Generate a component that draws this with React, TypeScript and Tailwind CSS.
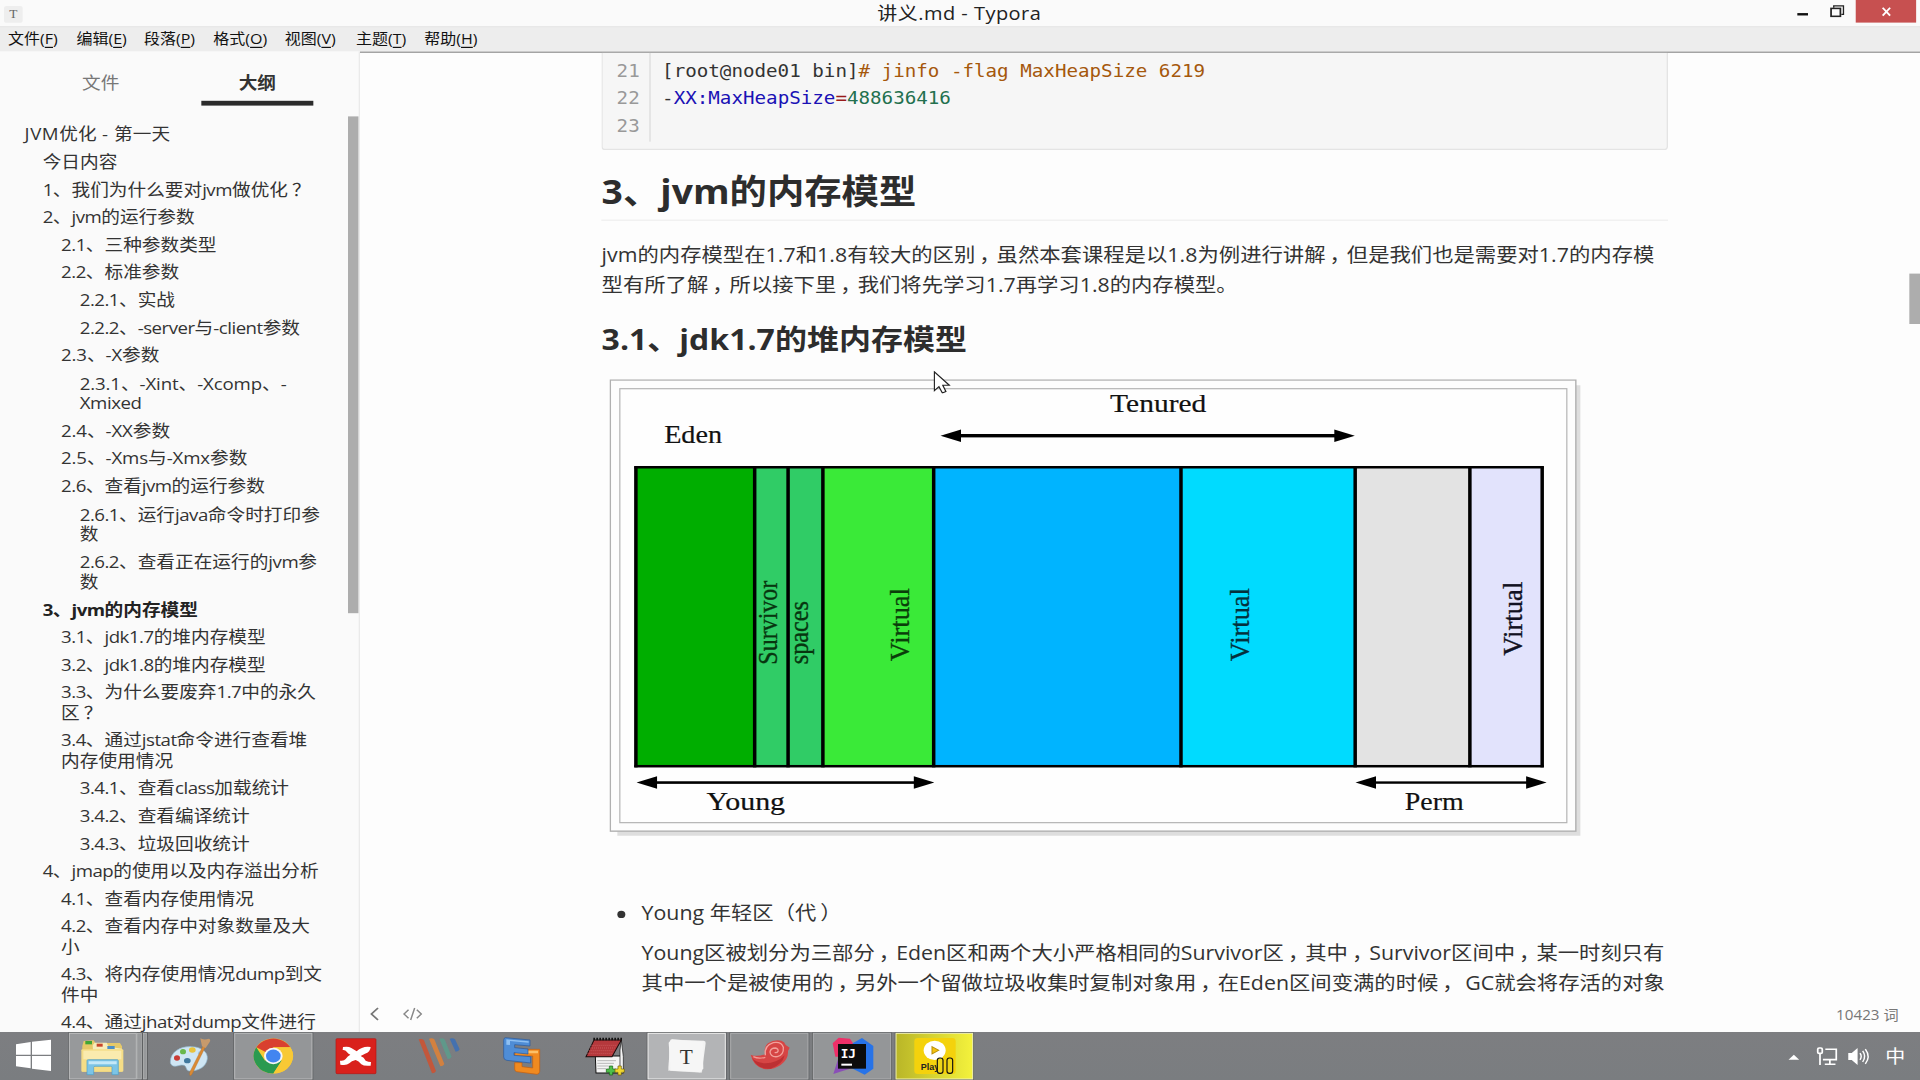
import React from "react";

const UI = "font-['Open_Sans','Noto_Sans_CJK_SC',sans-serif]";

/* ---------- text helpers ---------- */

const GLYPH_SHIFT: Record<string, string> = {
  "，": "ml-[3px] tracking-[-3px]",
  "？": "ml-[3px] tracking-[-3px]",
  "）": "ml-[3px] tracking-[-3px]",
};

function Mixed({ text, latin = "" }: { text: string; latin?: string }) {
  const parts = text.split(/([，？）]|[\x20-\x7e]+)/).filter(Boolean);
  return (
    <>
      {parts.map((p, i) => {
        if (GLYPH_SHIFT[p]) return <span key={i} className={GLYPH_SHIFT[p]}>{p}</span>;
        if (latin && /^[\x20-\x7e]+$/.test(p)) return <span key={i} className={latin}>{p}</span>;
        return <React.Fragment key={i}>{p}</React.Fragment>;
      })}
    </>
  );
}

/* ---------- title bar and menu ---------- */

function TitleBar() {
  return (
    <div className="flex h-[22.5px] shrink-0 items-start justify-between border-b border-[#dcdcdc] bg-[#fafafa]">
      <div className="flex w-[119px] pl-[3px] pt-[4.5px]">
        <div className="flex h-[14px] w-[14px] items-center justify-center rounded-[2px] bg-[#eeeeee] font-['Liberation_Serif',serif] text-[10px] leading-none text-[#666]">
          T
        </div>
      </div>
      <div className="text-[15px] leading-[22px] tracking-[0.35px] text-[#222]">讲义.md - Typora</div>
      <svg width="120" height="19" viewBox="1320 0 120 19" className="shrink-0">
        <rect x="1348" y="10.9" width="8" height="2" fill="#111" />
        <path d="M1375.3 6.4V4.9H1382.6V12H1381" fill="none" stroke="#222" strokeWidth="1" />
        <rect x="1373.3" y="7" width="7" height="6.6" fill="none" stroke="#222" strokeWidth="1.3" />
        <rect x="1391.8" y="0" width="45.3" height="19" fill="#c75050" />
        <path d="M1412 6.4l5.6 6.6M1417.6 6.4l-5.6 6.6" stroke="#fff" strokeWidth="1.4" />
      </svg>
    </div>
  );
}

function MenuBar() {
  const items: [string, string, string][] = [
    ["文件", "F", "w-[51.3px]"],
    ["编辑", "E", "w-[50.7px]"],
    ["段落", "P", "w-[52px]"],
    ["格式", "O", "w-[53.5px]"],
    ["视图", "V", "w-[53.5px]"],
    ["主题", "T", "w-[51.2px]"],
    ["帮助", "H", "w-[60px]"],
  ];
  return (
    <div className="flex h-[20.7px] shrink-0 items-start bg-[#ededed] pl-[6px] pt-[0.8px] text-[12px] text-[#111]">
      {items.map(([label, key, w]) => (
        <div key={key} className={w + " whitespace-nowrap leading-[20px]"}>
          {label}(<span className="underline underline-offset-2">{key}</span>)
        </div>
      ))}
    </div>
  );
}

/* ---------- outline ---------- */

type Entry = [number, string, string?];
const OUTLINE: Entry[] = [
  [0, "JVM优化 - 第一天"],
  [1, "今日内容"],
  [1, "1、我们为什么要对jvm做优化？"],
  [1, "2、jvm的运行参数"],
  [2, "2.1、三种参数类型"],
  [2, "2.2、标准参数"],
  [3, "2.2.1、实战"],
  [3, "2.2.2、-server与-client参数"],
  [2, "2.3、-X参数"],
  [3, "2.3.1、-Xint、-Xcomp、-", "Xmixed"],
  [2, "2.4、-XX参数"],
  [2, "2.5、-Xms与-Xmx参数"],
  [2, "2.6、查看jvm的运行参数"],
  [3, "2.6.1、运行java命令时打印参", "数"],
  [3, "2.6.2、查看正在运行的jvm参", "数"],
  [1, "3、jvm的内存模型"],
  [2, "3.1、jdk1.7的堆内存模型"],
  [2, "3.2、jdk1.8的堆内存模型"],
  [2, "3.3、为什么要废弃1.7中的永久", "区？"],
  [2, "3.4、通过jstat命令进行查看堆", "内存使用情况"],
  [3, "3.4.1、查看class加载统计"],
  [3, "3.4.2、查看编译统计"],
  [3, "3.4.3、垃圾回收统计"],
  [1, "4、jmap的使用以及内存溢出分析"],
  [2, "4.1、查看内存使用情况"],
  [2, "4.2、查看内存中对象数量及大", "小"],
  [2, "4.3、将内存使用情况dump到文", "件中"],
  [2, "4.4、通过jhat对dump文件进行"],
];
const INDENT = ["pl-[18.4px]", "pl-[32px]", "pl-[45.8px]", "pl-[59.8px]"];

function latinSpacing(level: number, text: string) {
  if (level === 0) return "tracking-[0.45px]";
  return text.includes("-X") ? "tracking-[-0.1px]" : "tracking-[-0.38px]";
}

function Sidebar() {
  return (
    <div className="flex w-[270px] shrink-0 flex-col overflow-hidden border-r border-[#eaeaea] bg-[#fafafa]">
      <div className="flex h-[53.8px] shrink-0 pt-[16px] text-[14px]">
        <div className="flex w-[151px] justify-center text-[#777]">
          <div className="leading-[20px]">文件</div>
        </div>
        <div className="flex h-[28.8px] w-[84px] justify-center border-b-[4.5px] border-[#2b2b2b] font-bold leading-[20px] text-[#333]">
          大纲
        </div>
      </div>
      <div className="flex min-h-0 flex-1">
        <div className="min-w-0 flex-1 pt-[4px] text-[14px] leading-[16.8px] text-[#333]">
          {OUTLINE.map(([level, a, b]) => (
            <div
              key={a}
              className={
                "whitespace-nowrap py-[3.13px] " +
                INDENT[level] +
                (a.startsWith("3、") ? " font-bold text-[#222]" : "")
              }
            >
              <Mixed text={a} latin={latinSpacing(level, a)} />
              {b && (
                <>
                  <br />
                  <Mixed text={b} latin="tracking-[-0.32px]" />
                </>
              )}
            </div>
          ))}
        </div>
        <div className="h-[414px] w-[8.3px] shrink-0 bg-[#adadad]" />
      </div>
    </div>
  );
}

/* ---------- heap diagram ---------- */

function Arrow({ x1, x2, y, w }: { x1: number; x2: number; y: number; w: number }) {
  return (
    <g fill="#000">
      <rect x={x1 + 15} y={y - w / 2} width={x2 - x1 - 30} height={w} />
      <path d={`M${x1} ${y}l20.5 -6.2v12.4z`} />
      <path d={`M${x2} ${y}l-20.5 -6.2v12.4z`} />
    </g>
  );
}

function Upright({ x, y, len, text, fill }: { x: number; y: number; len: number; text: string; fill: string }) {
  return (
    <text
      transform={`translate(${x} ${y}) rotate(-90)`}
      fontSize="28"
      textLength={len}
      lengthAdjust="spacingAndGlyphs"
      fill={fill}
      stroke={fill}
      strokeWidth="0.35"
    >
      {text}
    </text>
  );
}

function HeapDiagram() {
  const bars: [number, number, string][] = [
    [635.5, 754.3, "#00ae00"],
    [754.3, 787.7, "#30cc66"],
    [787.7, 822.5, "#30cc66"],
    [822.5, 933.3, "#3aea38"],
    [933.3, 1180.6, "#00b4ff"],
    [1180.6, 1354.8, "#00dbff"],
    [1354.8, 1469.5, "#e3e3e3"],
    [1469.5, 1541.8, "#e2e3fc"],
  ];
  return (
    <svg
      width="729"
      height="383.3"
      viewBox="609 379 972 460"
      preserveAspectRatio="none"
      className="ml-[5.9px] mt-[15.1px] block font-['Liberation_Serif',serif]"
    >
      <path d="M617 831h958.5v-446h4.5v450.5h-963z" fill="#dedede" />
      <rect x="610" y="379.8" width="965.5" height="451.2" fill="#fdfdfd" stroke="#b0b0b0" strokeWidth="1.4" />
      <rect x="619.5" y="388.5" width="947" height="434" fill="#fefefe" stroke="#b4b4b4" strokeWidth="1.2" />
      {bars.map(([a, b, c]) => (
        <rect key={a} x={a} y="467" width={b - a} height="299" fill={c} />
      ))}
      {[635.5, 754.3, 787.7, 822.5, 933.3, 1180.6, 1354.8, 1469.5, 1541.8].map((x) => (
        <rect key={x} x={x - 1.7} y="466" width="3.5" height="301.2" fill="#000" />
      ))}
      <rect x="634" y="465.8" width="909.4" height="2.5" fill="#000" />
      <rect x="634" y="764.8" width="909.4" height="2.5" fill="#000" />
      <Arrow x1={940.2} x2={1354.5} y={435.5} w={3.4} />
      <Arrow x1={636.2} x2={934} y={782.4} w={2.6} />
      <Arrow x1={1355.2} x2={1546.3} y={782.4} w={2.4} />
      <g fontSize="26" fill="#111" stroke="#111" strokeWidth="0.2">
        <text x="663.8" y="443.3" textLength="58" lengthAdjust="spacingAndGlyphs">Eden</text>
        <text x="1109.8" y="412" textLength="96.2" lengthAdjust="spacingAndGlyphs">Tenured</text>
        <text x="706.2" y="810" textLength="78.6" lengthAdjust="spacingAndGlyphs">Young</text>
        <text x="1404.5" y="810" textLength="59" lengthAdjust="spacingAndGlyphs">Perm</text>
      </g>
      <Upright x={776.7} y={664.5} len={84} text="Survivor" fill="#07350f" />
      <Upright x={807.6} y={664} len={63} text="spaces" fill="#07350f" />
      <Upright x={908.4} y={661} len={73} text="Virtual" fill="#0a3d0a" />
      <Upright x={1248.2} y={661} len={73} text="Virtual" fill="#04303c" />
      <Upright x={1521.3} y={655.5} len={74} text="Virtual" fill="#111122" />
    </svg>
  );
}

/* ---------- document ---------- */

function CodeBlock() {
  return (
    <div className="flex h-[81px] rounded-b-[3px] border border-t-0 border-[#e4e4e4] bg-[#f6f6f6] font-['DejaVu_Sans_Mono',monospace] text-[14.4px] leading-[23.1px]">
      <div className="h-[74px] w-[36px] border-r border-[#dddddd] pr-[7.4px] pt-[3.9px] text-right text-[#999]">
        21
        <br />
        22
        <br />
        23
      </div>
      <div className="whitespace-pre pl-[8.4px] pt-[3.9px] text-[#333]">
        [root@node01 bin]<span className="text-[#a5580c]"># jinfo -flag MaxHeapSize 6219</span>
        <br />
        -<span className="text-[#1a11b5]">XX:MaxHeapSize</span>
        <span className="text-[#981a1a]">=</span>
        <span className="text-[#22704e]">488636416</span>
      </div>
    </div>
  );
}

function Document() {
  return (
    <div className="w-[800px] text-[16px] leading-[25.3px] text-[#333]">
      <CodeBlock />
      <h2 className="mt-[15px] h-[44px] whitespace-nowrap border-b border-[#eeeeee] text-[28px] font-bold leading-[39px] text-[#2d2d2d]">
        3、jvm的内存模型
      </h2>
      <p className="mt-[16px] whitespace-nowrap">
        <Mixed text="jvm的内存模型在1.7和1.8有较大的区别，虽然本套课程是以1.8为例进行讲解，但是我们也是需要对1.7的内存模" latin="tracking-[0.04px]" />
        <br />
        <Mixed text="型有所了解，所以接下里，我们将先学习1.7再学习1.8的内存模型。" />
      </p>
      <h3 className="mt-[15.4px] whitespace-nowrap text-[24px] font-bold leading-[34px] text-[#2d2d2d]">
        3.1、jdk1.7的堆内存模型
      </h3>
      <div className="h-[0.6px]" />
      <HeapDiagram />
      <div className="mt-[50px] flex">
        <div className="ml-[12px] mt-[9.8px] h-[6px] w-[6px] rounded-full bg-[#333]" />
        <div className="whitespace-nowrap pl-[12px]">
          <p>
            <Mixed text="Young 年轻区（代）" />
          </p>
          <p className="mt-[7.2px]">
            <Mixed text="Young区被划分为三部分，Eden区和两个大小严格相同的Survivor区，其中，Survivor区间中，某一时刻只有" />
            <br />
            <Mixed text="其中一个是被使用的，另外一个留做垃圾收集时复制对象用，在Eden区间变满的时候， GC就会将存活的对象" />
          </p>
        </div>
      </div>
    </div>
  );
}

function Footer() {
  return (
    <div className="absolute inset-x-0 bottom-0 flex h-[29.6px] items-center justify-between pl-[6.8px] pr-[16px] text-[#777]">
      <div className="flex items-center gap-[17px]">
        <svg width="8" height="12" viewBox="0 0 8 12" fill="none" stroke="#777" strokeWidth="1.4">
          <path d="M6.5 1L1.6 6l4.9 5" />
        </svg>
        <svg width="15" height="12" viewBox="0 0 15 12" fill="none" stroke="#888" strokeWidth="1.1">
          <path d="M4.4 2.5L1 6l3.4 3.5M10.6 2.5L14 6l-3.4 3.5M9 1L6 11" />
        </svg>
      </div>
      <div className="text-[11.4px]">10423 词</div>
    </div>
  );
}

/* ---------- taskbar ---------- */

function Cell({ x, w = 248, children }: { x: number; w?: number; children: React.ReactNode }) {
  return (
    <svg width={w / 4} height="40" viewBox={`${x} 6 ${w} 144`} preserveAspectRatio="none" className="shrink-0">
      {children}
    </svg>
  );
}

function Frame({ x, fill, stroke, w = 232 }: { x: number; fill: string; stroke: string; w?: number }) {
  return (
    <>
      <rect x={x - 4} y="7" width={w + 8} height="143" fill="#5f6163" />
      <rect x={x} y="10" width={w} height="137" fill={fill} stroke={stroke} strokeWidth="3" />
    </>
  );
}

function Taskbar() {
  return (
    <div className="flex h-[40px] shrink-0 justify-between bg-[linear-gradient(#7d7e81,#7a7d80)]">
      <div className="flex">
        <Cell x={0} w={200}>
          <path d="M48 43l44-7v38H48zM96 35l57-6v45H96zM48 78h44v37l-44-6zM96 78h57v45l-57-7z" fill="#fff" />
        </Cell>
        <Cell x={200}>
          <rect x="204" y="7" width="240" height="143" fill="#5f6163" />
          <rect x="430" y="10" width="9" height="137" fill="#97999b" stroke="#b9babb" strokeWidth="2" />
          <rect x="413" y="10" width="11" height="137" fill="#97999b" stroke="#b9babb" strokeWidth="2" />
          <rect x="208" y="10" width="201" height="137" fill="#97999b" stroke="#bfc0c1" strokeWidth="3" />
          <path d="M247 48l4-15 30-2 5 8h74l6 10v76H246z" fill="#e6c969" />
          <rect x="256" y="33" width="20" height="10" fill="#3fa535" />
          <path d="M278 46l6-8h36l6 12 40 6v20H280z" fill="#f7edba" />
          <rect x="290" y="41" width="18" height="9" fill="#c8452c" />
          <rect x="322" y="48" width="22" height="9" fill="#4e8fc4" />
          <rect x="244" y="58" width="126" height="67" rx="3" fill="#f5dd86" />
          <rect x="250" y="62" width="114" height="26" fill="#faebae" />
          <path d="M261 92q0-3 4-3h86q4 0 4 3v42h-19v-22q0-3-4-3h-47q-4 0-4 3v22h-20z" fill="#7cc4e6" stroke="#4c9fc9" strokeWidth="2" />
          <path d="M266 94h84v9h-84z" fill="#c4e8f8" />
        </Cell>
        <Cell x={448}>
          <path d="M511 96c0-30 30-48 64-46 30 1 49 16 47 36-3 25-28 38-55 37-10-1-6-14-15-17-12-4-22 6-32 2-5-2-9-6-9-12z" fill="#cfe6f4" stroke="#8fb6cf" strokeWidth="2" />
          <ellipse cx="531" cy="84" rx="9" ry="8" fill="#c93b36" />
          <ellipse cx="549" cy="65" rx="9" ry="8" fill="#69b84c" />
          <ellipse cx="577" cy="60" rx="10" ry="8" fill="#e9c33d" />
          <ellipse cx="562" cy="92" rx="10" ry="8" fill="#41799e" />
          <ellipse cx="600" cy="70" rx="6" ry="6" fill="#9cc7e2" />
          <path d="M609 48l7 3-38 78q-4 9-8 8-3-3 0-12z" fill="#d98a35" stroke="#b36a22" strokeWidth="1" />
          <path d="M601 25q10 6 26 1 6 3 2 10l-12 18-11-5z" fill="#c79a6c" />
        </Cell>
        <Cell x={696}>
          <Frame x={704} fill="#949698" stroke="#b9babb" />
          <g transform="translate(820 78) scale(1 .89)">
            <circle r="59" fill="#f8c935" />
            <path d="M0 0L-51 -29.5A59 59 0 0 1 51 -29.5L0 -29.5z" fill="#d9402f" />
            <path d="M-51.1 -29.5A59 59 0 0 0 0 59L25.6 14.8L-25.6 14.8z" fill="#2a9a50" />
            <path d="M0 -29.5H51.1A59 59 0 0 1 0 59L25.6 14.8z" fill="#f8c935" />
            <circle r="28" fill="#f6f6f6" />
            <circle r="22" fill="#4285f0" />
          </g>
        </Cell>
        <Cell x={944}>
          <rect x="1008" y="26" width="120" height="105" rx="3" fill="#d9211c" stroke="#b31713" strokeWidth="2" />
          <path
            d="M1029 51q16-3 25 3l16 10q18-17 42-13-1 15-17 20l-13 7q10 4 15 14 8 4 16 4l-1 11q-20 2-28-4-8-11-17-13-13 2-19 10-9 8-27 4l-1-12q12 2 17-5 6-9 14-13-7-3-11-9-4-6-12-5z"
            fill="#fff"
          />
        </Cell>
        <Cell x={1192}>
          <g opacity=".85">
            <path d="M1256 28q10-3 16 3l36 92q-3 7-12 7z" fill="#d0512f" />
            <path d="M1287 26q10-3 16 2l30 74q-3 7-12 7z" fill="#e28235" />
            <path d="M1318 26q10-3 16 2l21 52q-3 7-12 7z" fill="#5c9d8c" />
            <path d="M1349 26q10-3 16 2l14 30q-3 7-12 7z" fill="#3b6fb8" />
          </g>
        </Cell>
        <Cell x={0}>
          <path d="M104 58h75v66q0 8-8 9l-61-8q-6-1-6-8V98h22v12l32 4V78h-54z" fill="#f08a20" stroke="#c65d0c" strokeWidth="2" />
          <path d="M108 62h66v8h-66z" fill="#fbc068" />
          <path d="M76 23l74 7v18l-46-4v9l40 4v15l-42-4v8l50 4v19l-72-8q-9-2-9-10V31q0-7 5-8z" fill="#4f8dd6" stroke="#28589c" strokeWidth="2" />
          <path d="M79 28l67 6v4l-56-5v12l-11-1z" fill="#8fc0f2" />
        </Cell>
        <Cell x={248}>
          <path d="M346 78h78v51h-76z" fill="#f4f4f4" stroke="#111" strokeWidth="3" />
          <path d="M424 30l6 50v50h-10V60z" fill="#f4f4f4" stroke="#111" strokeWidth="2" />
          <path d="M342 30h82l-28 50h-78z" fill="#b5383c" stroke="#1b0a0a" strokeWidth="3" />
          <path d="M334 46h76M330 54h74M326 62h74M322 70h76" stroke="#d4696b" strokeWidth="2" strokeDasharray="3 3" />
          <path d="M340 27h86" stroke="#111" strokeWidth="7" strokeDasharray="5 4" />
          <path d="M352 92h56M352 100h50M352 108h34M352 116h26" stroke="#999" strokeWidth="2" />
          <path d="M388 108h10v9h9v10h-9v8h-10v-8h-9v-10h9z" fill="#4fc04a" stroke="#125c12" strokeWidth="2" />
          <path d="M414 108h10v9h9v10h-9v8h-10v-8h-9v-10h9z" fill="#f0d830" stroke="#6d5c06" strokeWidth="2" />
        </Cell>
        <Cell x={496}>
          <Frame x={504} fill="#b3b4b6" stroke="#f0f0f0" />
          <path d="M572 28l100 6-6 94-102-6z" fill="#dcdcdc" />
          <path d="M569 35q2-7 10-5l92 2q7 1 6 8l-11 83q-2 5-9 4l-85-5q-7-1-6-8z" fill="#f3f3f3" />
          <path d="M566 38l10-10 92 8 2 80-12 10-86-6z" fill="#f6f6f6" />
          <text x="619" y="102" fontSize="64" textAnchor="middle" fill="#333" className="font-['Liberation_Serif',serif]">
            T
          </text>
        </Cell>
        <Cell x={744}>
          <Frame x={752} fill="#8e9092" stroke="#adaeb0" />
          <path
            d="M812 74q20 8 44-2-6-20 8-32 18-13 40-8 10 3 13 13l12 8-5 10q2 24-22 42-24 16-50 12-32-8-40-43z"
            fill="#d64545"
          />
          <path d="M816 84q12 14 40 16 34 0 58-24-6 28-42 40-38 4-56-32z" fill="#bd3033" />
          <path
            d="M856 76q-4-30 24-38 24-4 30 14 2 22-18 28-20 2-22-14 2-12 16-12 10 2 8 10-4 6-10 3"
            fill="none"
            stroke="#f2a19b"
            strokeWidth="4"
          />
          <path d="M820 80q16 8 36 2" fill="none" stroke="#f09a94" strokeWidth="4" />
        </Cell>
        <Cell x={992}>
          <Frame x={1000} fill="#949698" stroke="#adaeb0" />
          <path d="M1058 40l18-17 34 3 16 24v30h-60z" fill="#ee2f68" />
          <path d="M1118 40l28-16 34 24v68l-26 18-40-20z" fill="#2773e8" />
          <path d="M1060 132l14-44h44v26l-28 8z" fill="#8a4fb8" />
          <rect x="1074" y="42" width="84" height="74" fill="#0c0c0c" />
          <text x="1082" y="83" fontSize="38" fontWeight="bold" fill="#fff" className="font-['DejaVu_Sans_Mono',monospace]">
            IJ
          </text>
          <rect x="1084" y="101" width="32" height="6" fill="#fff" />
        </Cell>
        <Cell x={1240}>
          <defs>
            <linearGradient id="playback-bg" x1="0" x2="1">
              <stop offset="0" stopColor="#b9b628" />
              <stop offset="1" stopColor="#f4f23c" />
            </linearGradient>
          </defs>
          <Frame x={1248} w={230} fill="url(#playback-bg)" stroke="#f3f3b0" />
          <rect x="1303" y="24" width="124" height="108" rx="10" fill="#f4d20c" />
          <ellipse cx="1364" cy="61" rx="33" ry="29" fill="#fff" />
          <path d="M1356 50l20 11-20 11z" fill="#f4c20c" stroke="#b98f08" strokeWidth="3" />
          <text x="1322" y="119" fontSize="27" fontWeight="bold" fill="#222" className="font-['Liberation_Sans',sans-serif]">
            Play
          </text>
          <rect x="1372" y="84" width="17" height="46" rx="7" fill="#ecd51a" stroke="#111" strokeWidth="3.5" />
          <rect x="1401" y="84" width="17" height="46" rx="7" fill="#ecd51a" stroke="#111" strokeWidth="3.5" />
        </Cell>
      </div>
      <svg width="110" height="40" viewBox="1330 860 110 40" className="shrink-0">
        <path d="M1341.4 883.2l4-4.2 4 4.2z" fill="#fff" />
        <g fill="none" stroke="#fff" strokeWidth="1.3">
          <rect x="1363.3" y="873.4" width="3.4" height="4.4" rx="1" />
          <path d="M1365 878v9.4M1369 874.4h8.2v8.6h-10M1372.4 883v3.4M1368.6 886.8h8" />
        </g>
        <path d="M1386.2 877.4h2.6l4.4-4v14l-4.4-4h-2.6z" fill="#fff" />
        <path d="M1395 877.6q1.8 2.8 0 5.6M1397 875.8q3 4.6 0 9.2M1399 874.2q4.2 6.2 0 12.4" fill="none" stroke="#fff" strokeWidth="1.1" />
        <text x="1414" y="886" fontSize="15" fill="#fff" className="font-['Noto_Sans_CJK_SC',sans-serif]">
          中
        </text>
      </svg>
    </div>
  );
}

export default function App() {
  return (
    <div className="h-[1080px] w-[1920px] overflow-hidden bg-[#fdfdfd]">
      <div className={UI + " relative flex h-[900px] w-[1440px] origin-top-left scale-x-[1.33333] scale-y-[1.2] flex-col bg-[#fdfdfd]"}>
        <TitleBar />
        <MenuBar />
        <div className="flex min-h-0 flex-1">
          <Sidebar />
          <main className="relative flex min-w-0 flex-1 justify-between overflow-hidden border-t border-[#8e8e8e] pl-[181.2px]">
            <Document />
            <div className="mt-[184.3px] h-[41.4px] w-[8.2px] bg-[#adadad]" />
            <Footer />
          </main>
        </div>
        <Taskbar />
        <svg width="13" height="19" viewBox="0 0 17 23" preserveAspectRatio="none" className="absolute left-[699.8px] top-[309px]">
          <path d="M1 1v19l4.5-4 3.4 6.4 3.4-1.6-3-6.2h6.4z" fill="#fff" stroke="#222" strokeWidth="1.2" />
        </svg>
      </div>
    </div>
  );
}
